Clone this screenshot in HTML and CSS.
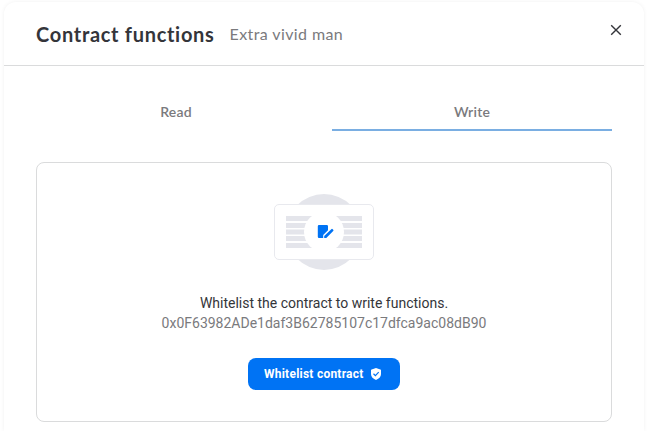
FILE: index.html
```
<!DOCTYPE html>
<html lang="en">
    <head>
        <meta charset="UTF-8">
        <title>Contract functions</title>
        <link rel="stylesheet" href="styles.css">
    </head>
    <body>
        <div class="modal">
            <header class="modal-header">
                <h1>Contract functions</h1>
                <span class="subtitle">Extra vivid man</span>
                <button class="close" aria-label="Close">
                    <svg width="12" height="12" viewBox="0 0 12 12">
                        <path d="M1.2 1.2l9.6 9.6M10.8 1.2l-9.6 9.6" stroke="#34353a" stroke-width="1.4" fill="none"/>
                    </svg>
                </button>
            </header>
            <div class="tabs">
                <div class="tab">Read</div>
                <div class="tab active">Write</div>
            </div>
            <section class="card">
                <svg class="picture" width="100" height="76" viewBox="0 0 100 76">
                    <circle cx="50" cy="38" r="38" fill="#e4e5eb"/>
                    <rect x="0.5" y="10.5" width="99" height="55" rx="4.5" fill="#fff" stroke="#e8e9ee"/>
                    <path d="M12 22h76v5H12zM12 29h76v5H12zM12 35.5h76v5H12zM12 42h76v5H12zM12 49h76v5H12z" fill="#e4e5eb"/>
                    <circle cx="50" cy="38" r="20" fill="#fff"/>
                    <path d="M45 31h7.800a1.200 1.200 0 0 1 1.200 1.200v4l-4.800 4.700V44H45a1.200 1.200 0 0 1-1.200-1.200V32.200A1.200 1.200 0 0 1 45 31z" fill="#0073f4"/>
                    <path d="M57.300 35.200a1 1 0 0 1 1.400 0l.5.5a1 1 0 0 1 0 1.400L52.300 44H50.200v-2z" fill="#0073f4"/>
                </svg>
                <p class="text">Whitelist the contract to write functions.</p>
                <p class="address">0x0F63982ADe1daf3B62785107c17dfca9ac08dB90</p>
                <button class="whitelist">
                    <span>Whitelist contract</span>
                    <svg width="10" height="12" viewBox="0 0 10 12">
                        <path d="M5 0l4.400 1.500q.6.2.6.8V6q0 3.800-5 6Q0 9.800 0 6V2.300q0-.6.6-.8z" fill="#fff"/>
                        <path d="M2.500 5.800l1.900 1.800 3.300-3.500" stroke="#0073f4" stroke-width="1.200" fill="none"/>
                    </svg>
                </button>
            </section>
        </div>
    </body>
</html>
```
FILE: styles.css
```
body {
    box-sizing: border-box;
    margin: 0;
    padding: 2px 4px 0;
    height: 431px;
    overflow: hidden;
    background-color: #fff;
    font-family: Roboto, sans-serif;
}
h1, p {
    margin: 0;
}
button {
    border: 0;
    padding: 0;
}
.modal {
    box-sizing: border-box;
    width: 640px;
    height: 429px;
    border-radius: 12px 12px 0 0;
    background-color: #fff;
    box-shadow: 0 0 4px rgba(0, 0, 0, 0.06);
}
.modal-header {
    display: flex;
    align-items: center;
    box-sizing: border-box;
    height: 64px;
    padding: 0 22px 0 32px;
    border-bottom: 1px solid #dadbdc;
    font-family: Lato, sans-serif;
}
h1 {
    color: #34353a;
    font-size: 20px;
    font-weight: 700;
    line-height: 24px;
    letter-spacing: 0.7px;
}
.subtitle {
    margin-left: 15px;
    color: #7a7a7d;
    font-size: 16px;
    line-height: 24px;
    letter-spacing: 0.4px;
}
.close {
    display: flex;
    margin: 0 0 8px auto;
    background: none;
}
.tabs {
    display: flex;
    margin: 31px 32px;
    font-family: Lato, sans-serif;
}
.tab {
    box-sizing: border-box;
    width: 280px;
    height: 34px;
    padding-top: 5px;
    border-bottom: 2px solid transparent;
    color: #7a7a7d;
    font-size: 14px;
    font-weight: 600;
    line-height: 20px;
    letter-spacing: 0.2px;
    text-align: center;
}
.active {
    margin-left: 16px;
    border-color: #7aaee2;
}
.card {
    display: flex;
    flex-direction: column;
    align-items: center;
    box-sizing: border-box;
    height: 260px;
    margin: 0 32px;
    padding-top: 31px;
    border: 1px solid #dadbdc;
    border-radius: 8px;
    font-size: 14px;
    line-height: 20px;
}
.picture {
    margin-bottom: 23px;
}
.text {
    color: #34353a;
}
.address {
    color: #7a7a7d;
}
.whitelist {
    display: flex;
    align-items: center;
    gap: 7px;
    width: 152px;
    height: 32px;
    margin-top: 25px;
    padding-left: 16px;
    border-radius: 8px;
    background-color: #0073f4;
    color: #fff;
    font-family: Roboto, sans-serif;
    font-size: 12px;
    font-weight: 700;
    letter-spacing: 0.24px;
}
```
